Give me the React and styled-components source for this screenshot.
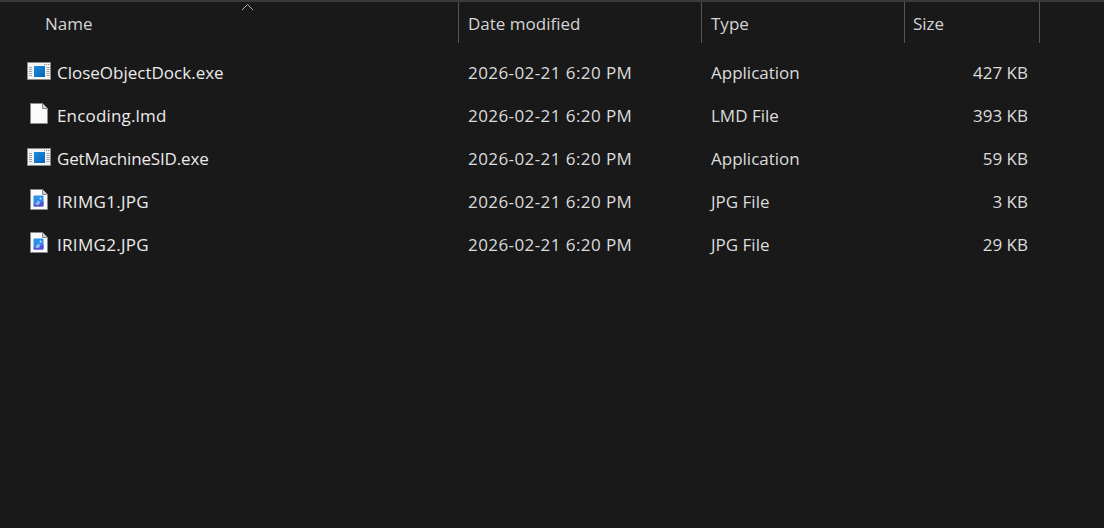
import React from "react";
import styled, { createGlobalStyle } from "styled-components";

const Global = createGlobalStyle`
  html, body { margin: 0; padding: 0; background: #191919; }
  body { font-family: "Open Sans", "Noto Sans", "Liberation Sans", sans-serif; }
`;

const Page = styled.div`
  width: 1104px;
  height: 528px;
  overflow: hidden;
  background: #191919;
  border-top: 2px solid #3a3a3a;
  box-sizing: border-box;
  color: #dcdcdc;
  font-size: 17px;
`;

const columns = "459px 243px 203px 135px";

const Header = styled.div`
  position: relative;
  display: grid;
  grid-template-columns: ${columns};
  height: 41px;
  margin-bottom: 8px;
`;

const HeaderCell = styled.div`
  box-sizing: border-box;
  display: flex;
  align-items: center;
  padding-left: ${(p) => p.$pad}px;
  padding-top: 2px;
  border-right: 1px solid #555;
  color: #d4d4d4;
`;

const SortCaret = styled.svg`
  position: absolute;
  left: 241px;
  top: 1px;
  width: 13px;
  height: 8px;
`;

const Row = styled.div`
  display: grid;
  grid-template-columns: ${columns};
  height: 43px;
  align-items: center;
`;

const NameCell = styled.div`
  display: flex;
  align-items: center;
  padding-left: 27px;
  color: #ebebeb;
  letter-spacing: ${(p) => p.$tracking}px;
`;

const IconSlot = styled.div`
  width: 30px;
  height: 24px;
  margin-bottom: 3px;
  display: flex;
  align-items: center;
  flex-shrink: 0;
`;

const Cell = styled.div`
  padding-left: 9px;
`;

const DateCell = styled(Cell)`
  letter-spacing: 0.42px;
`;

const SizeCell = styled.div`
  text-align: right;
  padding-right: 12px;
`;

const AppIcon = () => (
  <svg width="24" height="18" viewBox="0 0 24 18">
    <defs>
      <linearGradient id="appBlue" x1="0" y1="0" x2="1" y2="1">
        <stop offset="0" stopColor="#1a8ee0" />
        <stop offset="1" stopColor="#0a62b8" />
      </linearGradient>
    </defs>
    <rect x="0.5" y="0.5" width="23" height="17" fill="#f4f4f4" stroke="#8a8a8a" />
    <rect x="7" y="4" width="11" height="11" fill="url(#appBlue)" />
    <path d="M2 5.5h3M2 7.5h3M2 9.5h3M2 11.5h3M2 13.5h3M19.5 5.5h3M19.5 7.5h3M19.5 9.5h3M19.5 11.5h3M19.5 13.5h3" stroke="#a0a0a0" strokeWidth="1" />
    <path d="M17 2.5h1M19 2.5h1M21 2.5h1" stroke="#8a8a8a" strokeWidth="1" />
  </svg>
);

const PageShape = ({ children }) => (
  <svg width="24" height="22" viewBox="0 0 24 22">
    <path d="M3.5 0.5h12l5 5v15h-17z" fill="#fafafa" stroke="#8a8a8a" />
    <path d="M15.5 0.5v5h5" fill="#cfcfcf" stroke="#8a8a8a" />
    {children}
  </svg>
);

const FileIcon = () => <PageShape />;

const JpgIcon = () => (
  <PageShape>
    <rect x="6.5" y="6.5" width="10" height="11" rx="1" fill="#2a90e8" />
    <path d="M6.5 16l4.5-5.5 3 3 2.5-1.5v4.5a1 1 0 0 1-1 1h-8a1 1 0 0 1-1-1z" fill="#5b4fd0" />
    <path d="M8 15.5l3-4.5 2.5 2.5-2 2.5z" fill="#7fc4f4" />
    <circle cx="13.5" cy="9.5" r="1" fill="#cfeafc" />
  </PageShape>
);

const files = [
  { name: "CloseObjectDock.exe", Icon: AppIcon, type: "Application", size: "427 KB", tracking: 0 },
  { name: "Encoding.lmd", Icon: FileIcon, type: "LMD File", size: "393 KB", tracking: 0.17 },
  { name: "GetMachineSID.exe", Icon: AppIcon, type: "Application", size: "59 KB", tracking: -0.17 },
  { name: "IRIMG1.JPG", Icon: JpgIcon, type: "JPG File", size: "3 KB", tracking: 0.3 },
  { name: "IRIMG2.JPG", Icon: JpgIcon, type: "JPG File", size: "29 KB", tracking: 0.3 },
];

export default function App() {
  return (
    <Page>
      <Global />
      <Header>
        <HeaderCell $pad={45}>Name</HeaderCell>
        <HeaderCell $pad={9}>Date modified</HeaderCell>
        <HeaderCell $pad={9}>Type</HeaderCell>
        <HeaderCell $pad={8}>Size</HeaderCell>
        <SortCaret viewBox="0 0 13 8">
          <path d="M1 7l5.5-5.5L12 7" fill="none" stroke="#b0b0b0" strokeWidth="1" />
        </SortCaret>
      </Header>
      {files.map(({ name, Icon, type, size, tracking }) => (
        <Row key={name}>
          <NameCell $tracking={tracking}>
            <IconSlot><Icon /></IconSlot>
            {name}
          </NameCell>
          <DateCell>2026-02-21 6:20 PM</DateCell>
          <Cell>{type}</Cell>
          <SizeCell>{size}</SizeCell>
        </Row>
      ))}
    </Page>
  );
}
